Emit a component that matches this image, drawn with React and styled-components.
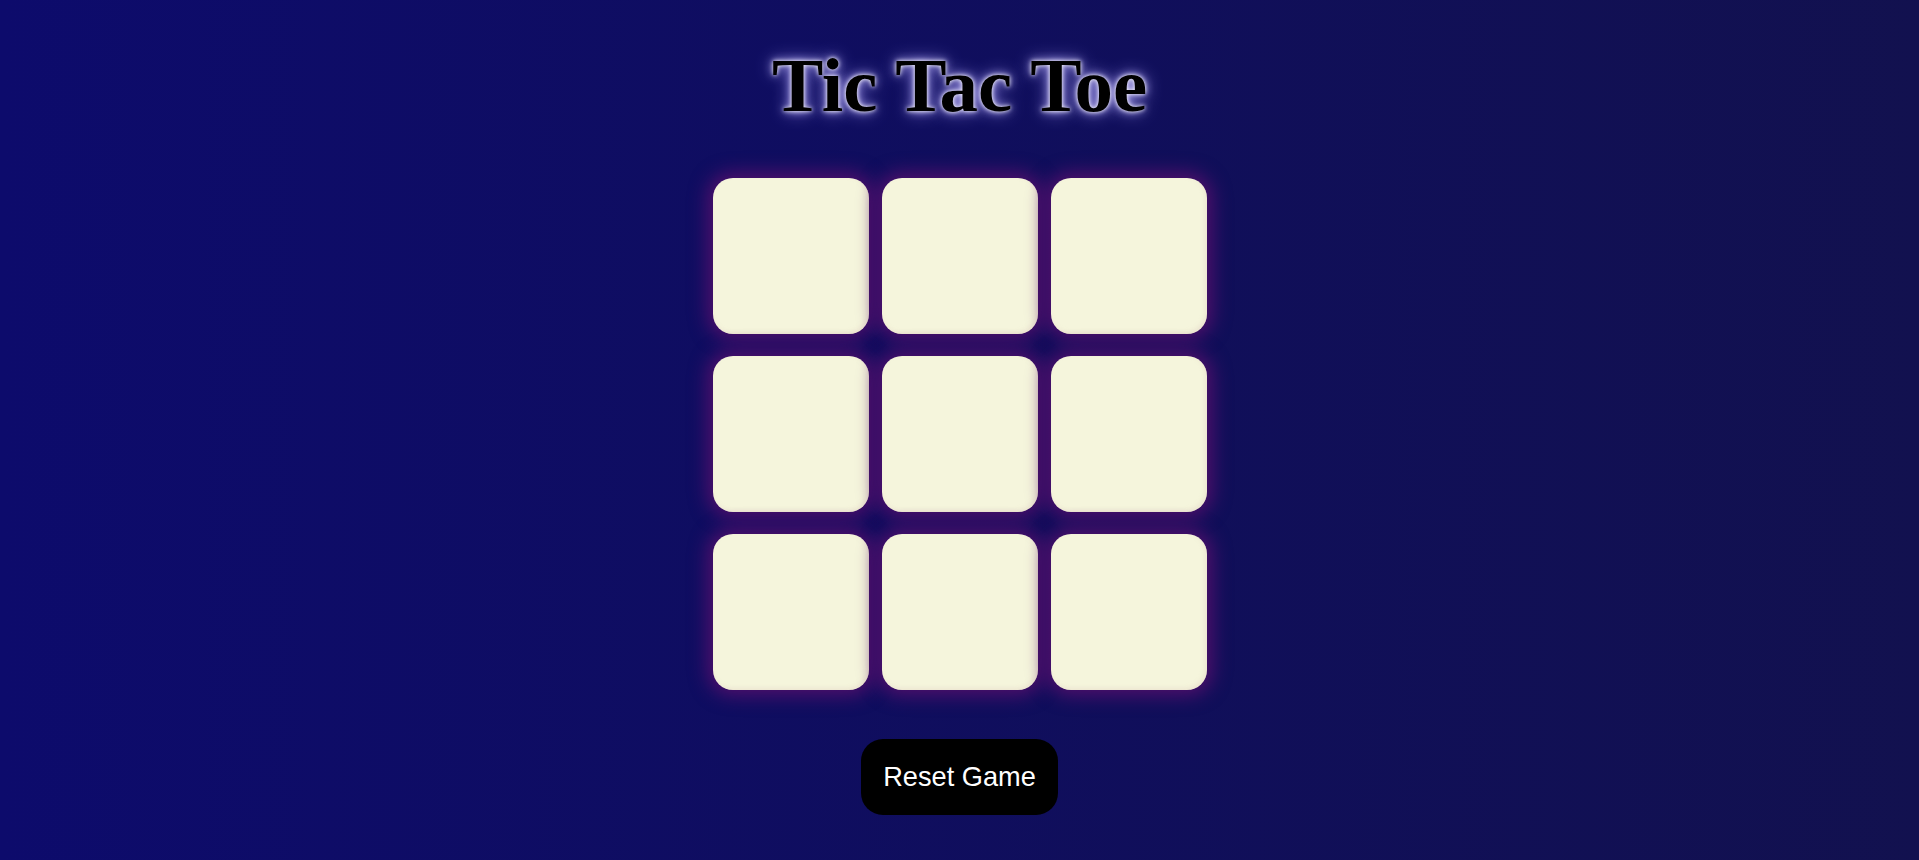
import React, { useState } from "react";
import styled, { createGlobalStyle } from "styled-components";

const GlobalStyle = createGlobalStyle`
  html, body { margin: 0; padding: 0; }
  body {
    min-height: 100vh;
    background: linear-gradient(to right, #0d0b6c, #12114f);
    font-family: "Liberation Sans", Arial, sans-serif;
  }
`;

const Page = styled.main`
  min-height: 100vh;
  display: flex;
  flex-direction: column;
  align-items: center;
`;

const Title = styled.h1`
  margin: 43px 0 0;
  font-family: "Liberation Serif", "Times New Roman", serif;
  font-weight: 700;
  font-size: 77px;
  line-height: 84px;
  color: #000;
  text-shadow: 0 0 4px #ffffff, 0 0 10px #c4bcff, 0 0 18px #8a80e0;
`;

const Board = styled.div`
  margin-top: 51px;
  display: grid;
  grid-template-columns: repeat(3, 156px);
  grid-auto-rows: 156px;
  column-gap: 13px;
  row-gap: 22px;
`;

const Cell = styled.button`
  border: none;
  padding: 0;
  border-radius: 20px;
  background: #f5f5dc;
  box-shadow: 0 0 18px 6px rgba(82, 16, 108, 0.95),
    inset -2px -2px 4px rgba(220, 200, 190, 0.35);
  font-family: "Liberation Sans", Arial, sans-serif;
  font-size: 96px;
  font-weight: 700;
  color: #111;
  cursor: pointer;
`;

const ResetButton = styled.button`
  margin-top: 49px;
  height: 76px;
  padding: 0 22px;
  border: none;
  border-radius: 22px;
  background: #000;
  color: #fff;
  font-family: "Liberation Sans", Arial, sans-serif;
  font-size: 27.2px;
  cursor: pointer;
`;

export default function App() {
  const [cells, setCells] = useState(Array(9).fill(""));
  const [turn, setTurn] = useState("X");

  const play = (i) => {
    if (cells[i]) return;
    const next = cells.slice();
    next[i] = turn;
    setCells(next);
    setTurn(turn === "X" ? "O" : "X");
  };

  const reset = () => {
    setCells(Array(9).fill(""));
    setTurn("X");
  };

  return (
    <>
      <GlobalStyle />
      <Page>
        <Title>Tic Tac Toe</Title>
        <Board>
          {cells.map((c, i) => (
            <Cell key={i} onClick={() => play(i)}>
              {c}
            </Cell>
          ))}
        </Board>
        <ResetButton onClick={reset}>Reset Game</ResetButton>
      </Page>
    </>
  );
}
